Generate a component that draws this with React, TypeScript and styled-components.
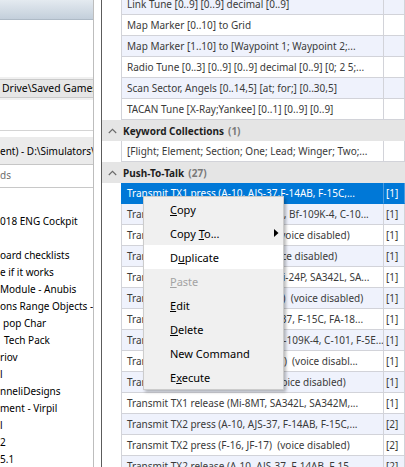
import React from "react";
import styled, { createGlobalStyle } from "styled-components";

const Global = createGlobalStyle`
  html, body { margin: 0; padding: 0; background: #ffffff; overflow: hidden; }
  #root { width: 405px; height: 467px; }
`;

const Screen = styled.div`
  position: relative;
  display: flex;
  width: 405px;
  height: 467px;
  overflow: hidden;
  background: #ffffff;
  font-family: "Noto Sans", "Open Sans", sans-serif;
  font-size: 10px;
`;

/* ---------- left panel ---------- */
const LeftPanel = styled.div`
  width: 93px;
  flex: none;
  border-right: 1px solid #bdbdbd;
  display: flex;
  flex-direction: column;
  overflow: hidden;
  color: #000;
`;

const LeftHeader = styled.div`
  height: 19px;
  flex: none;
  background: linear-gradient(#e4eaf0, #c3cfdb);
  border-bottom: 1px solid #aebac6;
`;

const Blank = styled.div<{ $h: number }>`
  height: ${(p) => p.$h}px;
  flex: none;
  background: #ffffff;
`;

const PathBand = styled.div`
  height: 23px;
  flex: none;
  background: #f0f0f0;
  display: flex;
  align-items: center;
`;

const PathField = styled.div`
  flex: 1;
  height: 19px;
  box-sizing: border-box;
  background: #e6e6e6;
  border-top: 1px solid #cacaca;
  border-bottom: 1px solid #cacaca;
  line-height: 17px;
  white-space: pre;
  overflow: hidden;
  padding-left: 2px;
  font-size: 10.4px;
`;

const Divider = styled.div`
  height: 1px;
  flex: none;
  background: #d4d4d4;
`;

const SourceBand = styled.div`
  height: 28px;
  flex: none;
  box-sizing: border-box;
  background: #ebebeb;
  border-bottom: 1px solid #c6c6c6;
  line-height: 28px;
  white-space: pre;
  overflow: hidden;
`;

const SearchBox = styled.div`
  height: 23px;
  flex: none;
  box-sizing: border-box;
  border-bottom: 1px solid #c8c8c8;
  color: #6d6d6d;
  line-height: 20px;
  white-space: pre;
`;

const Tree = styled.div`
  padding-top: 8px;
  display: flex;
  flex-direction: column;
`;

const TreeItem = styled.div<{ $indent?: number }>`
  height: 17px;
  line-height: 17px;
  white-space: pre;
  overflow: hidden;
  padding-left: ${(p) => p.$indent ?? 0}px;
`;

const Splitter = styled.div`
  width: 7px;
  flex: none;
  background: #ffffff;
  border-right: 1px solid #5c5c5c;
`;

/* ---------- right panel ---------- */
const RightPanel = styled.div`
  flex: 1;
  min-width: 0;
  overflow: hidden;
`;

const List = styled.div`
  margin-top: -6px;
  display: flex;
  flex-direction: column;
`;

const Row = styled.div`
  display: grid;
  grid-template-columns: 19px 263px 1fr;
  height: 21px;
`;

const Indent = styled.div`
  background: #ffffff;
`;

const Cell = styled.div<{ $alt?: boolean; $sel?: boolean; $first?: boolean }>`
  box-sizing: border-box;
  height: 21px;
  line-height: 20px;
  white-space: pre;
  overflow: hidden;
  padding-left: ${(p) => (p.$first ? "5px" : "2px")};
  color: ${(p) => (p.$sel ? "#ffffff" : "#3a3a3a")};
  background: ${(p) => (p.$sel ? "#0078d7" : p.$alt ? "#eff2fc" : "#ffffff")};
  border-bottom: 1px solid ${(p) => (p.$sel ? "#0078d7" : "#d2d3d9")};
  border-left: ${(p) => (p.$first ? `1px solid ${p.$sel ? "#0078d7" : "#d2d3d9"}` : "none")};
  border-right: 1px solid ${(p) => (p.$sel ? "#4a9be0" : "#d2d3d9")};
`;

const GroupHeader = styled.div`
  height: 21px;
  display: flex;
  align-items: center;
  background: #e5e5e5;
  font-weight: 700;
  color: #1e1e1e;
`;

const Chevron = styled.div`
  width: 21px;
  height: 21px;
  display: flex;
  align-items: center;
  justify-content: center;
  flex: none;
`;

const Count = styled.span`
  color: #7a7a7a;
  margin-left: 4px;
`;

/* ---------- context menu ---------- */
const Menu = styled.div`
  position: absolute;
  left: 143px;
  top: 196px;
  width: 141px;
  box-sizing: border-box;
  background: #f0f0f0;
  border: 1px solid #cccccc;
  box-shadow: 2px 2px 3px rgba(0, 0, 0, 0.28);
  font-size: 11px;
  color: #000;
`;

const MenuItem = styled.div<{ $hover?: boolean; $disabled?: boolean }>`
  position: relative;
  height: 24px;
  display: flex;
  align-items: center;
  padding-left: 26px;
  white-space: pre;
  background: ${(p) => (p.$hover ? "#ffffff" : "transparent")};
  color: ${(p) => (p.$disabled ? "#a3a3a3" : "#000")};
`;

const SubArrow = styled.svg`
  position: absolute;
  right: 4px;
  top: 8px;
`;

type R = { text: string; key2?: string; alt?: boolean; sel?: boolean };

const topRows: R[] = [
  { text: "Link Tune [0..9] [0..9] decimal [0..9]", alt: true },
  { text: "Map Marker [0..10] to Grid" },
  { text: "Map Marker [1..10] to [Waypoint 1; Waypoint 2;...", alt: true },
  { text: "Radio Tune [0..3] [0..9] [0..9] decimal [0..9] [0; 2 5;..." },
  { text: "Scan Sector, Angels [0..14,5] [at; for;] [0..30,5]", alt: true },
  { text: "TACAN Tune [X-Ray;Yankee] [0..1] [0..9] [0..9]" },
];

const keywordRows: R[] = [
  { text: "[Flight; Element; Section; One; Lead; Winger; Two;..." },
];

const pttTexts: [string, string][] = [
  ["Transmit TX1 press (A-10, AJS-37,F-14AB, F-15C,...", "[1]"],
  ["Transmit TX1 press (A-10C, AJS-37, Bf-109K-4, C-10...", "[1]"],
  ["Transmit TX1 press (F-16, JF-17)  (voice disabled)", "[1]"],
  ["Transmit TX1 press (Mi-8MT)  (voice disabled)", "[1]"],
  ["Transmit TX1 press (Mi-8MTV2, Mi-24P, SA342L, SA...", "[1]"],
  ["Transmit TX1 press (AV-8B, F-5E-3)  (voice disabled)", "[1]"],
  ["Transmit TX1 release (A-10C, AJS-37, F-15C, FA-18...", "[1]"],
  ["Transmit TX1 release (AV8BNA, Bf-109K-4, C-101, F-5E...", "[1]"],
  ["Transmit TX1 release (F-16C, JF-17)  (voice disabl...", "[1]"],
  ["Transmit TX1 release (Mi-8MT)  (voice disabled)", "[1]"],
  ["Transmit TX1 release (Mi-8MT, SA342L, SA342M,...", "[1]"],
  ["Transmit TX2 press (A-10, AJS-37, F-14AB, F-15C,...", "[2]"],
  ["Transmit TX2 press (F-16, JF-17)  (voice disabled)", "[2]"],
  ["Transmit TX2 release (A-10, AJS-37, F-14AB, F-15...", "[2]"],
];

const pttRows: R[] = pttTexts.map(([text, key2], i) => ({
  text,
  key2,
  sel: i === 0,
  alt: i % 2 === 1,
}));

const treeItems: { text: string; indent?: number }[] = [
  { text: "" },
  { text: "018 ENG Cockpit" },
  { text: "" },
  { text: "oard checklists" },
  { text: "e if it works" },
  { text: "Module - Anubis" },
  { text: "ons Range Objects -" },
  { text: "pop Char", indent: 3 },
  { text: "Tech Pack", indent: 4 },
  { text: "riov" },
  { text: "l" },
  { text: "nneliDesigns" },
  { text: "ment - Virpil" },
  { text: "l" },
  { text: "2" },
  { text: "5.1" },
];

const DataRow = ({ r }: { r: R }) => (
  <Row>
    <Indent />
    <Cell $first $alt={r.alt} $sel={r.sel}>
      {r.text}
    </Cell>
    <Cell $alt={r.alt} $sel={r.sel}>
      {r.key2 ?? ""}
    </Cell>
  </Row>
);

const Group = ({ title, count }: { title: string; count: number }) => (
  <GroupHeader>
    <Chevron>
      <svg width="9" height="6" viewBox="0 0 9 6">
        <polyline points="0.8,5 4.5,1.3 8.2,5" fill="none" stroke="#6a6a6a" strokeWidth="1.1" />
      </svg>
    </Chevron>
    {title}
    <Count>({count})</Count>
  </GroupHeader>
);

export default function App() {
  return (
    <Screen>
      <Global />
      <LeftPanel>
        <LeftHeader />
        <Blank $h={57} />
        <PathBand>
          <PathField>Drive\Saved Games</PathField>
        </PathBand>
        <Blank $h={30} />
        <Divider />
        <Blank $h={6} />
        <SourceBand>ent) - D:\Simulators\</SourceBand>
        <SearchBox>ds</SearchBox>
        <Tree>
          {treeItems.map((t, i) => (
            <TreeItem key={i} $indent={t.indent}>
              {t.text}
            </TreeItem>
          ))}
        </Tree>
      </LeftPanel>
      <Splitter />
      <RightPanel>
        <List>
          {topRows.map((r, i) => (
            <DataRow key={"t" + i} r={r} />
          ))}
          <Group title="Keyword Collections" count={1} />
          {keywordRows.map((r, i) => (
            <DataRow key={"k" + i} r={r} />
          ))}
          <Group title="Push-To-Talk" count={27} />
          {pttRows.map((r, i) => (
            <DataRow key={"p" + i} r={r} />
          ))}
        </List>
      </RightPanel>
      <Menu>
        <MenuItem>
          <span>
            <u>C</u>opy
          </span>
        </MenuItem>
        <MenuItem>
          <span>
            Copy <u>T</u>o...
          </span>
          <SubArrow width="5" height="8" viewBox="0 0 5 8">
            <path d="M0 0 L4.5 4 L0 8 Z" fill="#000" />
          </SubArrow>
        </MenuItem>
        <MenuItem $hover>
          <span>
            D<u>u</u>plicate
          </span>
        </MenuItem>
        <MenuItem $disabled>
          <span>
            <u>P</u>aste
          </span>
        </MenuItem>
        <MenuItem>
          <span>
            <u>E</u>dit
          </span>
        </MenuItem>
        <MenuItem>
          <span>
            <u>D</u>elete
          </span>
        </MenuItem>
        <MenuItem>
          <span>New Command</span>
        </MenuItem>
        <MenuItem>
          <span>
            E<u>x</u>ecute
          </span>
        </MenuItem>
      </Menu>
    </Screen>
  );
}
